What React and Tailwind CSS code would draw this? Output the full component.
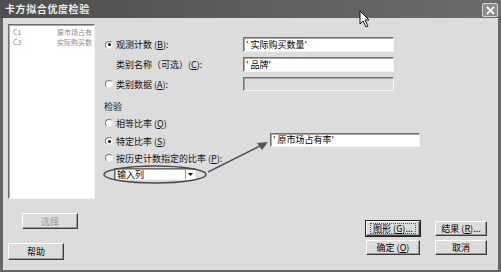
const font = { fontFamily: '"Noto Sans CJK SC", "Noto Sans", sans-serif' };

const sunken =
  'border border-t-[#6f6f6f] border-l-[#6f6f6f] border-r-[#f4f4f4] border-b-[#f4f4f4] shadow-[inset_1px_1px_0_#a8a8a8]';
const raised =
  'flex items-center justify-center bg-[#dcdcdc] border border-t-white border-l-white border-r-[#3c3c3c] border-b-[#3c3c3c] shadow-[inset_-1px_-1px_0_#9a9a9a] text-[9px] leading-none';

function Radio({ checked }) {
  return (
    <span className="w-[8px] h-[8px] rounded-full bg-white border border-t-[#7a7a7a] border-l-[#7a7a7a] border-r-[#e8e8e8] border-b-[#e8e8e8] flex items-center justify-center shrink-0">
      {checked && <span className="w-[3px] h-[3px] rounded-full bg-black" />}
    </span>
  );
}

function Field({ value, disabled, className = '' }) {
  return (
    <div
      className={`${sunken} ${disabled ? 'bg-[#dcdcdc]' : 'bg-white'} flex items-center pl-[2px] text-[9px] leading-none text-black ${className}`}
    >
      {value}
    </div>
  );
}

function Row({ children, field, labelW = 'w-[142px]', h = 'h-[15px]', className = '' }) {
  return (
    <div className={`flex items-center ${h} ${className}`}>
      <div className={`${labelW} flex items-center text-[9px] leading-none text-[#111]`}>{children}</div>
      {field}
    </div>
  );
}

export default function App() {
  return (
    <div className="w-[501px] h-[272px] bg-[#666] flex flex-col relative overflow-hidden" style={font}>
      {/* 标题栏 */}
      <div className="h-[18px] flex items-center justify-between pl-[5px] pr-[3px] bg-gradient-to-r from-[#4d4d4d] via-[#5e5e5e] to-[#6c6c6c]">
        <span className="text-[10px] font-bold text-[#ededed] tracking-[0.6px] leading-none">卡方拟合优度检验</span>
        <span className="w-[16px] h-[14px] mt-[2px] bg-[#8c8c8c] border border-[#d8d8d8] rounded-[2px] flex items-center justify-center">
          <svg width="9" height="9" viewBox="0 0 9 9">
            <path d="M1 1L8 8M8 1L1 8" stroke="#fff" strokeWidth="1.8" />
          </svg>
        </span>
      </div>

      {/* 主体 */}
      <div className="flex-1 mx-[3px] mb-[2px] bg-[#dcdcdc] flex">
        {/* 左侧变量列表 */}
        <div className="ml-[5px] pt-[6px] w-[87px] flex flex-col">
          <div className={`h-[175px] bg-white ${sunken} pt-[2px] pl-[4px] pr-[2px] text-[7px] leading-[10px] text-[#8a8a8a]`}>
            <div className="flex justify-between">
              <span>C1</span>
              <span>原市场占有</span>
            </div>
            <div className="flex justify-between">
              <span>C3</span>
              <span>实际购买数</span>
            </div>
          </div>
          <div className={`${raised} mt-[14px] ml-[14px] w-[56px] h-[16px] text-[#9a9a9a]`}>选择</div>
          <div className={`${raised} mt-[14px] w-[56px] h-[17px] text-black`}>帮助</div>
        </div>

        {/* 右侧选项 */}
        <div className="flex-1 ml-[6px] pt-[19px] flex flex-col">
          <Row field={<Field value="' 实际购买数量'" className="w-[151px] h-[15px]" />}>
            <span className="pl-[4px]"><Radio checked /></span>
            <span className="ml-[3px]">观测计数 (<u>B</u>):</span>
          </Row>
          <Row className="mt-[5px]" field={<Field value="' 品牌'" className="w-[151px] h-[15px]" />}>
            <span className="pl-[15px]">类别名称（可选）(<u>C</u>):</span>
          </Row>
          <Row className="mt-[5px]" h="h-[14px]" field={<Field disabled value="" className="w-[151px] h-[14px]" />}>
            <span className="pl-[4px]"><Radio /></span>
            <span className="ml-[3px]">类别数据 (<u>A</u>):</span>
          </Row>

          <div className="mt-[9px] h-[12px] pl-[3px] flex items-center text-[9px] leading-none text-[#111]">检验</div>

          <Row className="mt-[4px]" h="h-[14px]">
            <span className="pl-[4px]"><Radio /></span>
            <span className="ml-[3px]">相等比率 (<u>Q</u>)</span>
          </Row>
          <Row
            className="mt-[4px]"
            h="h-[14px]"
            labelW="w-[169px]"
            field={<Field value="' 原市场占有率'" className="w-[150px] h-[14px] -mt-[3px]" />}
          >
            <span className="pl-[4px]"><Radio checked /></span>
            <span className="ml-[3px]">特定比率 (<u>S</u>)</span>
          </Row>
          <Row className="mt-[3px]" h="h-[14px]" labelW="w-[200px]">
            <span className="pl-[4px]"><Radio /></span>
            <span className="ml-[3px]">按历史计数指定的比率 (<u>P</u>):</span>
          </Row>

          <div className={`mt-[3px] ml-[13px] w-[82px] h-[12px] bg-white ${sunken} flex items-center justify-between pl-[2px]`}>
            <span className="text-[9px] leading-none text-black">输入列</span>
            <span className="h-full w-[10px] border-l border-[#9a9a9a] flex items-center justify-center">
              <svg width="5" height="3" viewBox="0 0 5 3">
                <path d="M0 0H5L2.5 3Z" fill="#111" />
              </svg>
            </span>
          </div>

          {/* 底部按钮 */}
          <div className="mt-[41px] flex flex-col gap-[4px] items-end pr-[11px]">
            <div className="flex gap-[15px]">
              <div className={`${raised} w-[54px] h-[15px] outline outline-1 outline-[#222]`}>
                <span className="border border-dotted border-[#555] px-[2px]">图形 (<u>G</u>)...</span>
              </div>
              <div className={`${raised} w-[52px] h-[15px]`}>结果 (<u>R</u>)...</div>
            </div>
            <div className="flex gap-[15px]">
              <div className={`${raised} w-[54px] h-[15px]`}>确定 (<u>O</u>)</div>
              <div className={`${raised} w-[52px] h-[15px]`}>取消</div>
            </div>
          </div>
        </div>
      </div>

      {/* 标注：椭圆、箭头、鼠标指针 */}
      <svg className="absolute left-0 top-0 pointer-events-none" width="501" height="272">
        <ellipse cx="155" cy="174.5" rx="51" ry="8.5" fill="none" stroke="#4a4a4a" strokeWidth="1.4" />
        <line x1="208" y1="172" x2="262" y2="145" stroke="#555" strokeWidth="1.5" />
        <polygon points="268,142 257,143 262,150" fill="#555" />
        <polygon
          points="360,11 360,24 363,21 366,27 368,26 365,20 369,20"
          fill="#fff"
          stroke="#111"
          strokeWidth="1"
          strokeLinejoin="round"
        />
      </svg>
    </div>
  );
}
